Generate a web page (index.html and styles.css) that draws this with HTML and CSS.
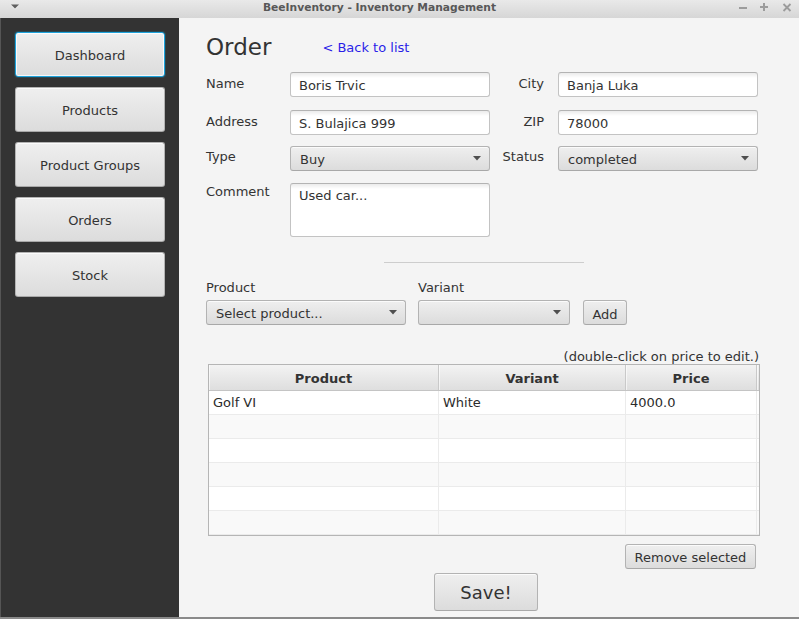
FILE: index.html
```html
<!DOCTYPE html>
<html>
<head>
<meta charset="utf-8">
<title>BeeInventory - Inventory Management</title>
<link rel="stylesheet" href="styles.css">
</head>
<body>
<div class="window">
  <div class="titlebar">
    <div class="tb-left">
      <svg width="10" height="6" viewBox="0 0 10 6"><polygon points="1,0.5 9,0.5 5,4.5" fill="#5f5f5f"/><polyline points="1,1.5 5,5.5 9,1.5" fill="none" stroke="#f2f2f2" stroke-width="0.8" opacity="0.6"/></svg>
    </div>
    <div class="tb-title">BeeInventory - Inventory Management</div>
    <div class="tb-right">
      <svg width="68" height="18" viewBox="0 0 68 18">
        <rect x="8" y="7" width="8" height="2" fill="#9c9c9c"/>
        <rect x="29" y="6" width="8" height="2" fill="#9c9c9c"/>
        <rect x="32" y="3" width="2" height="8" fill="#9c9c9c"/>
        <line x1="52.5" y1="4" x2="59.5" y2="11" stroke="#9c9c9c" stroke-width="1.8"/>
        <line x1="59.5" y1="4" x2="52.5" y2="11" stroke="#9c9c9c" stroke-width="1.8"/>
      </svg>
    </div>
  </div>
  <div class="body">
    <nav class="sidebar">
      <button class="btn nav-btn focused">Dashboard</button>
      <button class="btn nav-btn">Products</button>
      <button class="btn nav-btn">Product Groups</button>
      <button class="btn nav-btn">Orders</button>
      <button class="btn nav-btn">Stock</button>
    </nav>
    <main class="main">
      <div class="header">
        <h1 class="title">Order</h1>
        <a class="link" href="#">&lt; Back to list</a>
      </div>
      <div class="form">
        <div class="frow">
          <label class="lbl">Name</label>
          <input class="field" value="Boris Trvic">
          <label class="lbl lbl-right">City</label>
          <input class="field" value="Banja Luka">
        </div>
        <div class="frow frow-address">
          <label class="lbl">Address</label>
          <input class="field" value="S. Bulajica 999">
          <label class="lbl lbl-right">ZIP</label>
          <input class="field" value="78000">
        </div>
        <div class="frow frow-type">
          <label class="lbl lbl-combo">Type</label>
          <div class="combo"><span>Buy</span><svg class="arrow" width="8" height="5" viewBox="0 0 8 5"><polygon points="0,0 8,0 4,4.6" fill="#4f4f4f"/></svg></div>
          <label class="lbl lbl-combo lbl-right">Status</label>
          <div class="combo"><span>completed</span><svg class="arrow" width="8" height="5" viewBox="0 0 8 5"><polygon points="0,0 8,0 4,4.6" fill="#4f4f4f"/></svg></div>
        </div>
        <div class="frow frow-comment">
          <label class="lbl lbl-top">Comment</label>
          <textarea class="area">Used car...</textarea>
        </div>
      </div>

      <div class="sep"></div>

      <div class="add-row">
        <div class="pick pick-product">
          <div class="lbl">Product</div>
          <div class="combo"><span>Select product...</span><svg class="arrow" width="8" height="5" viewBox="0 0 8 5"><polygon points="0,0 8,0 4,4.6" fill="#4f4f4f"/></svg></div>
        </div>
        <div class="pick pick-variant">
          <div class="lbl">Variant</div>
          <div class="combo"><span></span><svg class="arrow" width="8" height="5" viewBox="0 0 8 5"><polygon points="0,0 8,0 4,4.6" fill="#4f4f4f"/></svg></div>
        </div>
        <button class="btn add-btn">Add</button>
      </div>

      <div class="hint">(double-click on price to edit.)</div>

      <div class="table">
        <div class="thead">
          <div class="th c-product">Product</div>
          <div class="th c-variant">Variant</div>
          <div class="th c-price">Price</div>
          <div class="th c-fill"></div>
        </div>
        <div class="tbody">
          <div class="tr"><div class="td c-product">Golf VI</div><div class="td c-variant">White</div><div class="td c-price">4000.0</div><div class="td c-fill"></div></div>
          <div class="tr"><div class="td c-product"></div><div class="td c-variant"></div><div class="td c-price"></div><div class="td c-fill"></div></div>
          <div class="tr"><div class="td c-product"></div><div class="td c-variant"></div><div class="td c-price"></div><div class="td c-fill"></div></div>
          <div class="tr"><div class="td c-product"></div><div class="td c-variant"></div><div class="td c-price"></div><div class="td c-fill"></div></div>
          <div class="tr"><div class="td c-product"></div><div class="td c-variant"></div><div class="td c-price"></div><div class="td c-fill"></div></div>
          <div class="tr"><div class="td c-product"></div><div class="td c-variant"></div><div class="td c-price"></div><div class="td c-fill"></div></div>
          <div class="tr"><div class="td c-product"></div><div class="td c-variant"></div><div class="td c-price"></div><div class="td c-fill"></div></div>
        </div>
      </div>

      <div class="remove-row"><button class="btn remove-btn">Remove selected</button></div>
      <div class="save-row"><button class="btn save-btn">Save!</button></div>
    </main>
  </div>
  <div class="frame-bottom"></div>
</div>
</body>
</html>
```

FILE: styles.css
```css
* { box-sizing: border-box; }

html, body {
  margin: 0;
  padding: 0;
  width: 799px;
  height: 619px;
  overflow: hidden;
  background: #f4f4f4;
  font-family: "DejaVu Sans", Verdana, sans-serif;
  font-size: 13px;
  color: #333;
}

.window {
  width: 799px;
  height: 619px;
  display: flex;
  flex-direction: column;
}

/* Title bar */
.titlebar {
  height: 18px;
  display: flex;
  background: linear-gradient(#e9e9e9, #d6d6d6);
}
.tb-left {
  width: 28px;
  padding: 4px 0 0 10px;
}
.tb-left svg { display: block; }
.tb-title {
  flex: 1;
  text-align: center;
  font-weight: bold;
  font-size: 10.7px;
  line-height: 16px;
  color: #585858;
  white-space: nowrap;
}
.tb-right {
  width: 68px;
}
.tb-right svg { display: block; }

/* Body */
.body {
  flex: 1;
  display: flex;
  min-height: 0;
}

.sidebar {
  width: 179px;
  background: #333333;
  border-left: 1px solid #555;
  padding: 14px 0 0 14px;
  display: flex;
  flex-direction: column;
  gap: 10px;
}

.btn {
  font-family: "DejaVu Sans", Verdana, sans-serif;
  font-size: 13px;
  color: #333;
  background: linear-gradient(#efefef, #dcdcdc);
  border: 1px solid #b3b3b3;
  border-bottom-color: #a8a8a8;
  border-radius: 3px;
  box-shadow: inset 0 1px 0 rgba(255, 255, 255, 0.75);
  padding: 0;
  margin: 0;
}

.nav-btn {
  width: 150px;
  height: 45px;
  padding-top: 2px;
}
.nav-btn.focused {
  border-color: #1fa3dc;
  box-shadow: inset 0 0 0 1px rgba(255, 255, 255, 0.8), 0 0 0 1px rgba(3, 158, 211, 0.2);
}

.main {
  flex: 1;
  background: #f4f4f4;
  padding: 16px 0 0 27px;
  overflow: hidden;
}
.main > * { width: 554px; }

.header {
  height: 27px;
  display: flex;
  align-items: center;
}
.title {
  margin: 0;
  font-size: 23px;
  font-weight: normal;
  line-height: 27px;
  color: #333;
}
.link {
  margin-left: 51px;
  color: #2a1fe8;
  text-decoration: none;
  line-height: 16px;
  margin-top: 1px;
}

/* Form */
.form {
  margin-top: 11px;
  display: flex;
  flex-direction: column;
}
.frow {
  display: grid;
  grid-template-columns: 84px 200px 68px 200px;
  height: 25px;
}
.frow-address { margin-top: 13px; }
.frow-type { margin-top: 11px; }
.frow-comment { margin-top: 12px; height: 54px; }

.lbl {
  line-height: 16px;
  padding-top: 4px;
  color: #333;
}
.lbl-combo { padding-top: 3px; }
.lbl-right {
  text-align: right;
  padding-right: 14px;
}
.lbl-top { padding-top: 1px; }

.field {
  width: 200px;
  height: 25px;
  margin: 0;
  padding: 2px 8px 0 8px;
  font-family: "DejaVu Sans", Verdana, sans-serif;
  font-size: 13px;
  color: #333;
  border: 1px solid #c3c3c3;
  border-top-color: #b3b3b3;
  border-radius: 3px;
  background: linear-gradient(#ebebeb, #ffffff 5px);
  outline: none;
}

.area {
  width: 200px;
  height: 54px;
  margin: 0;
  padding: 4px 8px;
  font-family: "DejaVu Sans", Verdana, sans-serif;
  font-size: 13px;
  line-height: 16px;
  color: #333;
  border: 1px solid #c3c3c3;
  border-top-color: #b3b3b3;
  border-radius: 3px;
  background: linear-gradient(#ebebeb, #ffffff 5px);
  resize: none;
  outline: none;
  overflow: hidden;
}

.combo {
  height: 25px;
  display: flex;
  align-items: center;
  justify-content: space-between;
  padding: 2px 8px 0 9px;
  background: linear-gradient(#efefef, #dcdcdc);
  border: 1px solid #b3b3b3;
  border-bottom-color: #a8a8a8;
  border-radius: 3px;
  box-shadow: inset 0 1px 0 rgba(255, 255, 255, 0.75);
  color: #333;
  line-height: 21px;
}
.arrow { display: block; flex: none; margin-top: -2px; }

.sep {
  margin-top: 25px;
  margin-left: 178px;
  width: 200px !important;
  height: 1px;
  background: #cdcdcd;
}

/* Add row */
.add-row {
  margin-top: 16px;
  display: flex;
  align-items: flex-end;
}
.pick {
  display: flex;
  flex-direction: column;
  gap: 4px;
}
.pick .lbl { padding-top: 1px; }
.pick-product { width: 200px; }
.pick-variant { width: 152px; margin-left: 12px; }
.add-btn {
  margin-left: 13px;
  width: 44px;
  height: 25px;
  padding-top: 3px;
}

.hint {
  margin-top: 23px;
  height: 16px;
  line-height: 18px;
  text-align: right;
  padding-right: 1px;
}

/* Table */
.table {
  margin-left: 2px;
  width: 552px !important;
  border: 1px solid #b5b5b5;
  background: #fff;
}
.thead {
  display: flex;
  height: 26px;
  border-bottom: 1px solid #c4c4c4;
  background: linear-gradient(#f3f3f3, #dedede);
}
.th {
  border-right: 1px solid #c9c9c9;
  text-align: center;
  font-weight: bold;
  line-height: 28px;
  color: #333;
  box-shadow: inset 1px 0 0 rgba(255, 255, 255, 0.6);
}
.c-product { width: 230px; flex: none; }
.c-variant { width: 187px; flex: none; }
.c-price { width: 131px; flex: none; }
.c-fill { flex: 1; border-right: none !important; }

.tbody {
  height: 144px;
  overflow: hidden;
}
.tr {
  display: flex;
  height: 24px;
  border-bottom: 1px solid #ebebeb;
  background: #fff;
}
.tr:nth-child(even) { background: #f9f9f9; }
.td {
  border-right: 1px solid #ebebeb;
  padding-left: 4px;
  line-height: 23px;
  color: #2b2b2b;
  white-space: nowrap;
}

.remove-row {
  margin-top: 8px;
  display: flex;
  justify-content: flex-end;
  padding-right: 4px;
}
.remove-btn {
  width: 131px;
  height: 25px;
  padding-top: 1px;
}

.save-row {
  margin-top: 4px;
  padding-left: 228px;
}
.save-btn {
  width: 104px;
  height: 38px;
  font-size: 18px;
}

.frame-bottom {
  height: 2px;
  background: #8a8a8a;
}
```
